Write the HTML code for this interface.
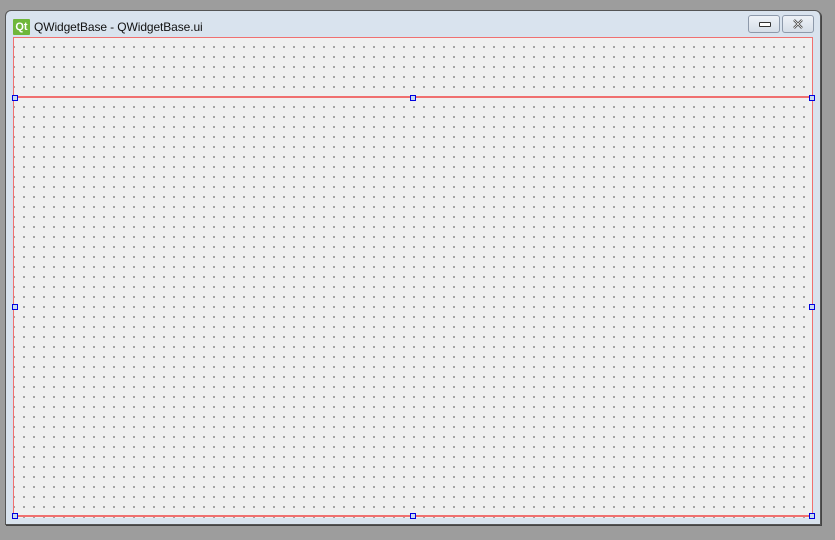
<!DOCTYPE html>
<html><head><style>
html,body{margin:0;padding:0;width:835px;height:540px;overflow:hidden;background:#9d9d9d;font-family:"Liberation Sans",sans-serif}
.win{position:absolute;left:5px;top:10px;width:814px;height:513px;background:#d9e3ee;border:1px solid #555;border-radius:6px 6px 0 0;box-shadow:1px 1px 0 #444}
.title{position:absolute;left:34px;top:20px;font-size:12px;letter-spacing:-0.1px;color:#111}
.qt{position:absolute;left:13px;top:19px;width:17px;height:16px;background:#6fb73a;color:#fff;font-size:11px;font-weight:bold;line-height:16px;text-align:center;border-radius:1px}
.btn{position:absolute;top:15px;width:30px;height:16px;border:1px solid #8d99aa;border-radius:3px;background:linear-gradient(#eef2f7,#d6dee8)}
.client{position:absolute;left:13px;top:37px;width:800px;height:481px;background-color:#f0f0f0;
background-image:radial-gradient(circle,#8a8a8a 0.9px,transparent 1px);background-size:10px 10px;background-position:6px 5px}
.rl{position:absolute;background:#f07070}
.h{position:absolute;width:4px;height:4px;border:1px solid #0000e0;background:#c8dcf0}
</style></head><body>
<div class="win"></div>
<div class="qt">Qt</div>
<div class="title">QWidgetBase - QWidgetBase.ui</div>
<div class="btn" style="left:748px"><div style="position:absolute;left:10px;top:6px;width:10px;height:3px;border:1px solid #333;border-radius:1px;background:#fff"></div></div>
<div class="btn" style="left:782px"><svg width="30" height="16" style="position:absolute;left:0;top:0"><path d="M11 4 L19 12 M19 4 L11 12" stroke="#444" stroke-width="2.4"/><path d="M11 4 L19 12 M19 4 L11 12" stroke="#fff" stroke-width="0.8"/></svg></div>
<div class="client"></div>
<div class="rl" style="left:13px;top:37px;width:800px;height:1px"></div>
<div class="rl" style="left:13px;top:37px;width:1px;height:480px"></div>
<div class="rl" style="left:812px;top:37px;width:1px;height:480px"></div>
<div class="rl" style="left:13px;top:515px;width:800px;height:2px"></div>
<div class="rl" style="left:13px;top:96px;width:800px;height:2px"></div>
<div class="h" style="left:12px;top:95px"></div>
<div class="h" style="left:410px;top:95px"></div>
<div class="h" style="left:809px;top:95px"></div>
<div class="h" style="left:12px;top:304px"></div>
<div class="h" style="left:809px;top:304px"></div>
<div class="h" style="left:12px;top:513px"></div>
<div class="h" style="left:410px;top:513px"></div>
<div class="h" style="left:809px;top:513px"></div>
</body></html>
